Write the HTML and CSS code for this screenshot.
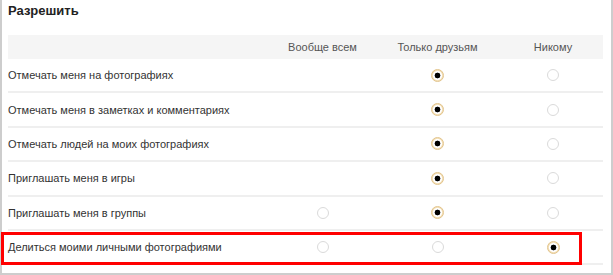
FILE: index.html
```html
<!DOCTYPE html>
<html lang="ru">
<head>
<meta charset="utf-8">
<link rel="stylesheet" href="styles.css">
</head>
<body>
<div class="frame">
  <h2 class="title">Разрешить</h2>
  <div class="table">
    <div class="row head">
      <div class="label"></div>
      <div class="cell">Вообще всем</div>
      <div class="cell">Только друзьям</div>
      <div class="cell last">Никому</div>
    </div>
    <div class="row">
      <div class="label">Отмечать меня на фотографиях</div>
      <div class="cell"></div>
      <div class="cell"><span class="radio on"></span></div>
      <div class="cell last"><span class="radio"></span></div>
    </div>
    <div class="row">
      <div class="label">Отмечать меня в заметках и комментариях</div>
      <div class="cell"></div>
      <div class="cell"><span class="radio on"></span></div>
      <div class="cell last"><span class="radio"></span></div>
    </div>
    <div class="row">
      <div class="label">Отмечать людей на моих фотографиях</div>
      <div class="cell"></div>
      <div class="cell"><span class="radio on"></span></div>
      <div class="cell last"><span class="radio"></span></div>
    </div>
    <div class="row">
      <div class="label">Приглашать меня в игры</div>
      <div class="cell"></div>
      <div class="cell"><span class="radio on"></span></div>
      <div class="cell last"><span class="radio"></span></div>
    </div>
    <div class="row">
      <div class="label">Приглашать меня в группы</div>
      <div class="cell"><span class="radio"></span></div>
      <div class="cell"><span class="radio on"></span></div>
      <div class="cell last"><span class="radio"></span></div>
    </div>
    <div class="row">
      <div class="label">Делиться моими личными фотографиями</div>
      <div class="cell"><span class="radio"></span></div>
      <div class="cell"><span class="radio"></span></div>
      <div class="cell last"><span class="radio on"></span></div>
    </div>
  </div>
  <div class="highlight"></div>
</div>
</body>
</html>
```

FILE: styles.css
```css
html, body {
  margin: 0;
  padding: 0;
  background: #fff;
}
body {
  font-family: "Liberation Sans", Arial, sans-serif;
  color: #333;
}
.frame {
  position: relative;
  width: 613px;
  height: 275px;
  box-sizing: border-box;
  border: 2px solid #cdcdcd;
  border-top: none;
  padding: 0 8px 0 6px;
}
.title {
  margin: 0;
  height: 35px;
  padding-top: 3px;
  box-sizing: border-box;
  font-size: 13px;
  line-height: 16px;
  font-weight: bold;
  color: #222;
}
.table {
  display: flex;
  flex-direction: column;
}
.row {
  display: grid;
  grid-template-columns: 257px 115px 115px 108px;
  align-items: center;
  height: 34.4px;
  box-sizing: border-box;
  border-bottom: 2px solid #efefef;
  font-size: 11px;
}
.row.head {
  height: 24px;
  background: #f5f5f5;
  border-bottom: none;
  color: #555;
}
.label {
  padding-left: 0;
}
.cell {
  display: flex;
  justify-content: center;
  align-items: center;
}
.cell.last {
  padding-left: 8px;
}
.radio {
  display: block;
  width: 12px;
  height: 12px;
  box-sizing: border-box;
  border-radius: 50%;
  border: 1px solid #dadada;
  background: #fff;
}
.radio.on {
  width: 13px;
  height: 13px;
  border: 1px solid #e2c48c;
  background: radial-gradient(circle, #000 0 2.6px, #fff 3.2px 4.2px, #f4e1bb 4.8px);
}
.highlight {
  position: absolute;
  left: -1px;
  top: 232px;
  width: 581px;
  height: 33px;
  box-sizing: border-box;
  border: 3px solid #f00;
}
```
